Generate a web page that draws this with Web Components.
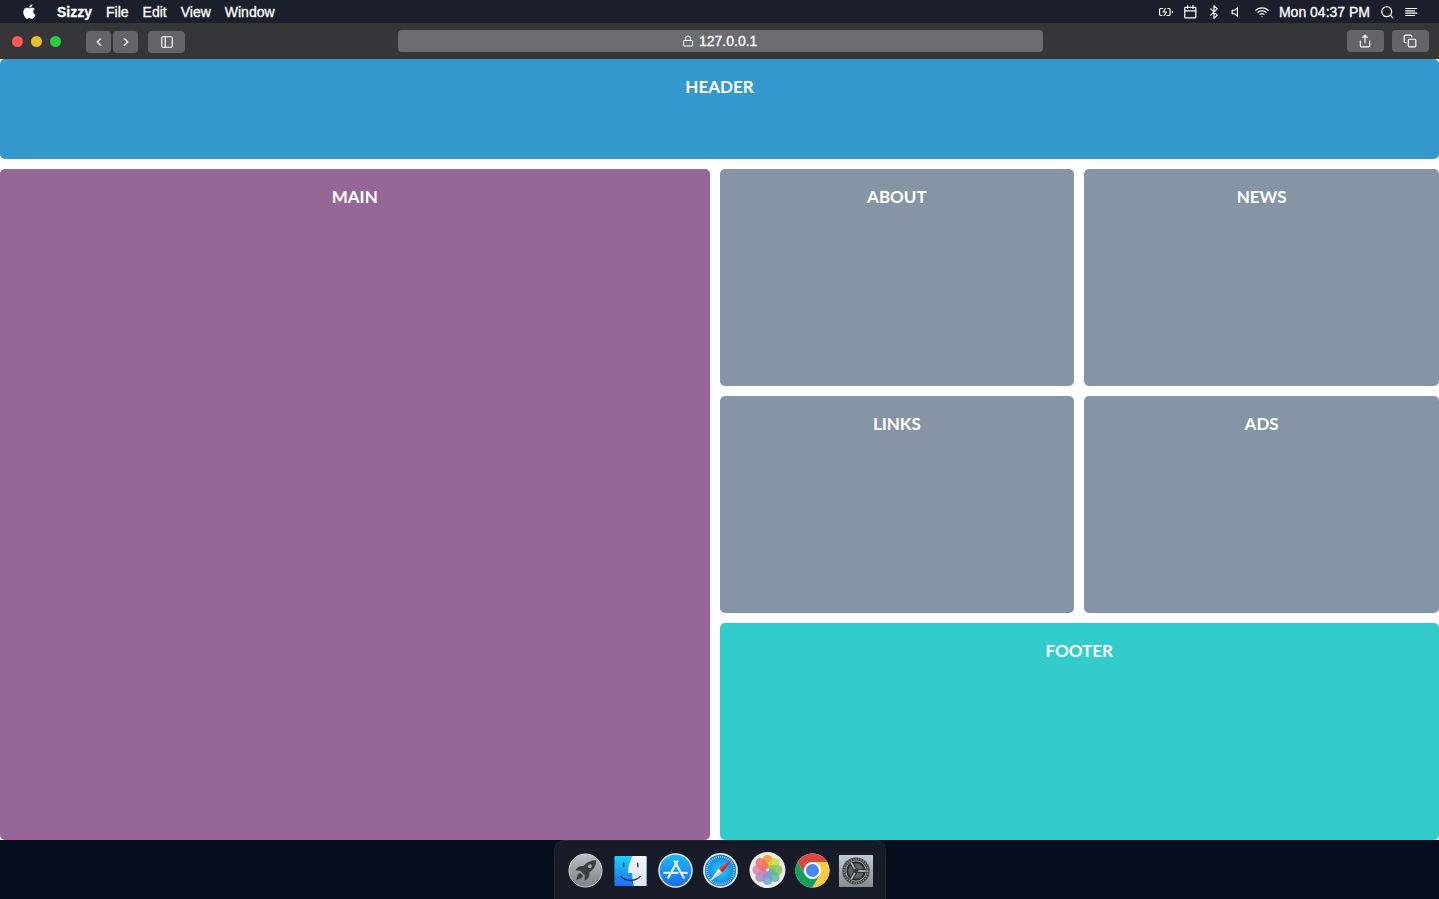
<!DOCTYPE html>
<html lang="en">
<head>
<meta charset="utf-8">
<title>Sizzy</title>
<style>
  html, body { height: 100%; margin: 0; }
  body { background: #060d1d; font-family: "Liberation Sans", Arial, sans-serif; font-size: 14px; color: #fff; }
</style>
</head>
<body>
<desk-top></desk-top>

<script>
const stroke = (body, width = 2) =>
  `<svg viewBox="0 0 24 24" fill="none" stroke="currentColor" stroke-width="${width}" stroke-linecap="round" stroke-linejoin="round" aria-hidden="true">${body}</svg>`;

const icons = {
  apple: `<svg viewBox="0 0 24 24" fill="currentColor" aria-hidden="true"><path d="M16.6 0.3c.2 1.400-.400 2.800-1.200 3.800-.900 1.100-2.200 1.900-3.600 1.800-.200-1.400.5-2.800 1.300-3.700.900-1 2.400-1.800 3.500-1.900zM21.600 17.400c-.6 1.500-.900 2.100-1.700 3.400-1.100 1.700-2.600 2.900-4.100 2.900-1.400 0-1.900-.9-3.700-.9s-2.300.9-3.700.9c-1.500 0-2.800-1.300-3.900-3C1.500 16 1.300 11 3.400 8.300c1.200-1.500 2.900-2.400 4.600-2.400 1.700 0 2.800.9 4.200.9s2.200-.9 4.200-.9c1.500 0 3.100.8 4.200 2.200-3.700 2-3.100 7.300 1 9.300z"/></svg>`,
  battery: stroke('<path d="M5 18H3a2 2 0 0 1-2-2V8a2 2 0 0 1 2-2h3.200M15 6h2a2 2 0 0 1 2 2v8a2 2 0 0 1-2 2h-3.200M23 13v-2M11 6l-4 6h6l-4 6"/>'),
  calendar: stroke('<rect x="3" y="4" width="19" height="18" rx="1"/><path d="M17 1v5M8 1v5M3 10h19"/>'),
  bluetooth: stroke('<path d="M6.500 6.500l11 11L12 23V1l5.500 5.500-11 11"/>'),
  volume: stroke('<path d="M11 5L6 9H2v6h4l5 4V5z"/>'),
  wifi: stroke('<path d="M5 12.500a11 11 0 0 1 14 0M1.400 9a16 16 0 0 1 21.200 0M8.500 16.100a6 6 0 0 1 7 0M12 20h.01"/>'),
  search: stroke('<circle cx="11.500" cy="11.500" r="8.500"/><path d="M22 22l-4.500-4.500"/>'),
  list: stroke('<path d="M18 10H3M22 6H3M22 14H3M18 18H3"/>'),
  back: stroke('<path d="M15 18l-6-6 6-6"/>'),
  forward: stroke('<path d="M9 18l6-6-6-6"/>'),
  sidebar: stroke('<rect x="3" y="3" width="18" height="18" rx="2"/><path d="M9 3v18"/>'),
  lock: stroke('<rect x="3" y="11" width="18" height="11" rx="2"/><path d="M7 11V7a5 5 0 0 1 10 0v4"/>'),
  share: stroke('<path d="M4 12v8a2 2 0 0 0 2 2h12a2 2 0 0 0 2-2v-8M16 6l-4-4-4 4M12 2v13"/>'),
  copy: stroke('<rect x="9" y="9" width="13" height="13" rx="2"/><path d="M5 15H4a2 2 0 0 1-2-2V4a2 2 0 0 1 2-2h9a2 2 0 0 1 2 2v1"/>')
};

const ring = (n, draw) => Array.from({ length: n }, (_, i) => draw(i * 360 / n)).join('');

const apps = {
  Launchpad: `<defs><linearGradient id="a" x2="0" y2="1"><stop stop-color="#b9c1c6"/><stop offset="1" stop-color="#7d8183"/></linearGradient></defs>
    <circle cx="18" cy="18" r="17" fill="url(#a)" stroke="#d3d8da"/>
    <path d="M29 7.500c-5.500 0-10 2-13 6-3.500-.5-6.500 1-8.500 4.500l5 .2 4.800 4.800-.3 5.500c4-2 5.500-5 5-8.500 4.500-3 7-7 7-12.500z" fill="#3b3d40"/>
    <path d="M12.500 20.500l3 3c-1 3-4 3-7 4.500 1-3.500 1-6.500 4-7.500z" fill="#3b3d40"/><circle cx="22.500" cy="13.500" r="2" fill="#a4aaad"/>`,
  Finder: `<defs><linearGradient id="a" x2="0" y2="1"><stop stop-color="#1ad3fb"/><stop offset="1" stop-color="#1f6df2"/></linearGradient><linearGradient id="b" x2="0" y2="1"><stop stop-color="#f7f6f7"/><stop offset="1" stop-color="#dce8f5"/></linearGradient></defs>
    <rect x="1.500" y="3" width="33" height="31" rx="1" fill="url(#a)"/>
    <path d="M20 3h13.500q1 0 1 1v29q0 1-1 1H21.500c-.8-2.500-1.300-5.500-1.500-9l-.2-4.500h-4.300C15.700 14 17.500 7.500 20 3z" fill="url(#b)"/>
    <path d="M11 10.500v3.500M25.500 10.500v3.500M8 24c5 5.500 15 5.500 20 0" fill="none" stroke="#1b2a40" stroke-width="1.300" stroke-linecap="round"/>`,
  'App Store': `<defs><linearGradient id="a" x2="0" y2="1"><stop stop-color="#1bbdfb"/><stop offset="1" stop-color="#1a6af0"/></linearGradient></defs>
    <circle cx="18" cy="18" r="17" fill="url(#a)" stroke="#e4e8ec" stroke-width="1.500"/>
    <path d="M20 8.500l-9.500 17M17 8.500l9.500 17M6.500 20.500h13.500M25 20.500h4.500" fill="none" stroke="#dcedff" stroke-width="2.400" stroke-linecap="round"/>`,
  Safari: `<defs><radialGradient id="a"><stop stop-color="#1ed0f7"/><stop offset="1" stop-color="#1679e0"/></radialGradient></defs>
    <circle cx="18" cy="18" r="17" fill="url(#a)" stroke="#e6e9eb" stroke-width="1.800"/>
    <circle cx="18" cy="18" r="14" fill="none" stroke="#bfe6fb" stroke-width="2" stroke-dasharray=".7 1.4"/>
    <path d="M30 6.500L20 20l-4-4z" fill="#f0393a"/><path d="M6.500 29.500L16 16l4 4z" fill="#f4f1f1"/><path d="M30 6.500L20 20l-2-2z" fill="#c9252b"/><path d="M6.500 29.500L18 18l2 2z" fill="#c3cad0"/>`,
  Photos: `<circle cx="20" cy="17.500" r="18.500" fill="#efeeec"/>` +
    ['#f7941d', '#c5d93b', '#86c65a', '#58b99c', '#6ba5dc', '#a487cc', '#df7fa8', '#f07060'].map((c, i) =>
      `<rect x="15" y="2" width="10" height="15" rx="5" fill="${c}" opacity=".84" transform="rotate(${i * 45} 20 17.500)"/>`).join('') +
    `<circle cx="20" cy="17.500" r="1.500" fill="#fff6e2"/>`,
  Chrome: `<circle cx="20" cy="18" r="17.500" fill="#fff"/>
    <path d="M4.840 9.250A17.500 17.500 0 0 1 35.160 9.250H20a8.750 8.750 0 0 0-7.580 13.130z" fill="#db4a3e"/>
    <path d="M35.160 9.250A17.500 17.500 0 0 1 20 35.500l7.580-13.120A8.750 8.750 0 0 0 20 9.250z" fill="#fdcb42"/>
    <path d="M20 35.500A17.500 17.500 0 0 1 4.840 9.250l7.580 13.130a8.750 8.750 0 0 0 15.160 0z" fill="#159f5c"/>
    <circle cx="20" cy="18" r="8" fill="#fff"/><circle cx="20" cy="18" r="6.700" fill="#4787f4"/>`,
  'System Preferences': `<defs><linearGradient id="a" x2="0" y2="1"><stop stop-color="#bfccd6"/><stop offset="1" stop-color="#898b8d"/></linearGradient></defs>
    <rect x="1" y="2" width="35" height="33" rx="1" fill="url(#a)"/>
    <circle cx="18.500" cy="18.500" r="14" fill="#3e4042"/>
    <circle cx="18.500" cy="18.500" r="12.300" fill="none" stroke="#9a9da0" stroke-width="1.500" stroke-dasharray="1.200 1.400"/>
    <circle cx="18.500" cy="18.500" r="9" fill="#5f6163" stroke="#26282a" stroke-width="2"/>
    <circle cx="18.500" cy="18.500" r="10.500" fill="none" stroke="#a5a7a9"/>
    ${ring(3, a => `<path d="M18.500 18.500h10" stroke="#2b2d2f" stroke-width="4" transform="rotate(${a} 18.500 18.500)"/><path d="M18.500 18.500h10" stroke="#b8babc" stroke-width="1.800" transform="rotate(${a} 18.500 18.500)"/>`)}
    <circle cx="18.500" cy="18.500" r="2.500" fill="#393b3d"/>`
};

const define = (name, html, setup) => customElements.define(name, class extends HTMLElement {
  connectedCallback() {
    if (this.shadowRoot) return;
    const template = document.createElement('template');
    template.innerHTML = html;
    this.attachShadow({ mode: 'open' }).append(template.content.cloneNode(true));
    if (setup) setup(this, this.shadowRoot);
  }
});

define('ui-icon', `
  <style>:host { display: block; flex: none; width: var(--icon-size, 14px); height: var(--icon-size, 14px); } svg { display: block; width: 100%; height: 100%; }</style>`,
  (host, root) => root.append(document.createRange().createContextualFragment(icons[host.getAttribute('name')])));

define('menu-bar', `
  <style>
    :host { display: flex; justify-content: space-between; align-items: center; height: 23px; padding: 0 21px 0 22px; background: #1b1f2b; line-height: 16px; -webkit-text-stroke: 0.3px; }
    nav, div { display: flex; align-items: center; }
    nav { gap: 14px; }
    div { gap: 10px; }
    button { display: block; padding: 0; border: 0; background: none; color: inherit; font: inherit; }
    .app { font-weight: bold; }
    .apple { margin-right: 6px; }
  </style>
  <nav aria-label="Application menu">
    <button class="apple" aria-label="Apple"><ui-icon name="apple" style="--icon-size:15px"></ui-icon></button>
    <button class="app">Sizzy</button><button>File</button><button>Edit</button><button>View</button><button>Window</button>
  </nav>
  <div>
    <ui-icon name="battery"></ui-icon><ui-icon name="calendar"></ui-icon><ui-icon name="bluetooth"></ui-icon><ui-icon name="volume"></ui-icon><ui-icon name="wifi"></ui-icon>
    <time>Mon 04:37 PM</time>
    <button aria-label="Search"><ui-icon name="search"></ui-icon></button>
    <button aria-label="Notifications"><ui-icon name="list"></ui-icon></button>
  </div>`);

define('tool-button', `
  <style>
    :host { display: block; width: 37px; height: 22px; }
    :host([narrow]) { width: 25px; }
    button { display: flex; align-items: center; justify-content: center; width: 100%; height: 100%; padding: 0; border: 0; border-radius: 4px; background: #646466; color: #fff; }
  </style>
  <button></button>`,
  (host, root) => {
    const button = root.querySelector('button');
    const icon = document.createElement('ui-icon');
    icon.setAttribute('name', host.getAttribute('icon'));
    button.setAttribute('aria-label', host.getAttribute('label'));
    button.append(icon);
  });

define('browser-bar', `
  <style>
    :host { display: grid; grid-template-columns: 3fr 5fr 3fr; align-items: center; height: 36px; padding: 0 10px 0 12px; background: #363638; }
    .left, .right, .lights, .history, label { display: flex; align-items: center; }
    .left { gap: 10px; padding-top: 1px; }
    .right { gap: 8px; justify-content: flex-end; }
    .lights { gap: 8px; margin-right: 15px; }
    .lights i { width: 11px; height: 11px; border-radius: 50%; background: var(--c); }
    .history { gap: 2px; }
    label { justify-content: center; gap: 5px; height: 22px; border-radius: 4px; background: #6c6c6e; }
    input { box-sizing: border-box; width: 60px; height: 22px; padding: 0; border: 0; background: none; color: #fff; font: inherit; outline: 0; -webkit-text-stroke: 0.3px; }
  </style>
  <div class="left">
    <div class="lights"><i style="--c:#ff5a52"></i><i style="--c:#e6c029"></i><i style="--c:#29cc41"></i></div>
    <div class="history"><tool-button narrow icon="back" label="Back"></tool-button><tool-button narrow icon="forward" label="Forward"></tool-button></div>
    <tool-button icon="sidebar" label="Toggle sidebar"></tool-button>
  </div>
  <label><ui-icon name="lock" style="--icon-size:12px"></ui-icon><input value="127.0.0.1" aria-label="Address"></label>
  <div class="right">
    <tool-button icon="share" label="Share"></tool-button><tool-button icon="copy" label="Tabs"></tool-button>
  </div>`);

define('grid-panel', `
  <style>
    :host { display: block; box-sizing: border-box; padding: 16px 20px; border-radius: 5px; background: var(--panel, #8595a5); text-align: center; }
    h2 { margin: 0; font: bold 17px/24px Lato, sans-serif; color: #fff; }
  </style>
  <h2><slot></slot></h2>`);

define('page-grid', `
  <style>
    :host { display: grid; gap: 10px; grid-template: 100px repeat(3, minmax(0, 1fr)) / 2fr 1fr 1fr;
      grid-template-areas: "header header header" "main about news" "main links ads" "main footer footer"; background: #fff; }
    .header { grid-area: header; --panel: #3399cc; }
    .main { grid-area: main; --panel: #966696; }
    .footer { grid-area: footer; --panel: #33cccc; }
  </style>
  <grid-panel class="header">HEADER</grid-panel>
  <grid-panel class="main">MAIN</grid-panel>
  <grid-panel>ABOUT</grid-panel>
  <grid-panel>NEWS</grid-panel>
  <grid-panel>LINKS</grid-panel>
  <grid-panel>ADS</grid-panel>
  <grid-panel class="footer">FOOTER</grid-panel>`);

define('dock-app', `
  <style>
    :host { display: block; width: 35px; height: 35px; }
    button { display: block; width: 100%; height: 100%; padding: 0; border: 0; background: none; }
    svg { display: block; width: 100%; height: 100%; overflow: visible; }
  </style>
  <button></button>`,
  (host, root) => {
    const name = host.getAttribute('name');
    const button = root.querySelector('button');
    button.setAttribute('aria-label', name);
    button.innerHTML = `<svg viewBox="0 0 36 36" aria-hidden="true">${apps[name]}</svg>`;
  });

define('app-dock', `
  <style>
    :host { display: flex; justify-content: center; height: 59px; background: #060d1d; }
    nav { display: flex; align-items: center; gap: 10px; padding: 0 12px 0 13px; border: 1px solid #242833; border-bottom: 0; border-radius: 10px 10px 0 0; background: #171b28; }
  </style>
  <nav aria-label="Dock">${Object.keys(apps).map(name => `<dock-app name="${name}"></dock-app>`).join('')}</nav>`);

define('desk-top', `
  <style>
    :host { display: flex; flex-direction: column; min-height: 100vh; }
    page-grid { flex: 1; }
  </style>
  <menu-bar></menu-bar>
  <browser-bar></browser-bar>
  <page-grid></page-grid>
  <app-dock></app-dock>`);
</script>
</body>
</html>
